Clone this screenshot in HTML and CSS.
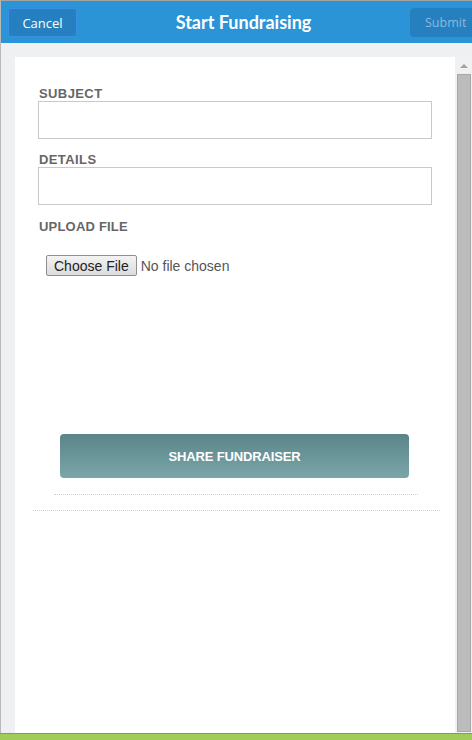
FILE: index.html
```html
<!DOCTYPE html>
<html>
<head>
<meta charset="utf-8">
<link rel="stylesheet" href="styles.css">
</head>
<body>
<div class="app">
  <header class="topbar">
    <button class="hbtn cancel">Cancel</button>
    <h1 class="title">Start Fundraising</h1>
    <button class="hbtn submit">Submit</button>
  </header>
  <main class="stage">
    <div class="panel">
      <div class="content">
        <form class="form">
          <label class="lbl">SUBJECT</label>
          <input class="field" type="text">
          <label class="lbl">DETAILS</label>
          <input class="field" type="text">
          <label class="lbl upl">UPLOAD FILE</label>
          <div class="filewrap"><input class="file" type="file"></div>
        </form>
        <div class="actions">
          <button class="share">SHARE FUNDRAISER</button>
        </div>
        <div class="rule rule1"></div>
        <div class="rule rule2"></div>
      </div>
      <div class="scrollbar">
        <div class="arrow"></div>
        <div class="thumb"></div>
      </div>
    </div>
  </main>
  <footer class="greenbar"></footer>
</div>
</body>
</html>
```
FILE: styles.css
```css
* { box-sizing: border-box; }
html, body { margin: 0; padding: 0; }
body { width: 472px; height: 740px; overflow: hidden; font-family: "Liberation Sans", Arial, sans-serif; background: #eff0f2; }
.app { height: 740px; display: flex; flex-direction: column; border-top: 1px solid #a3a3a3; border-left: 1px solid #b9b9b9; }
.topbar { height: 42px; flex: none; background: #2b94d7; display: flex; align-items: center; justify-content: space-between; padding: 0 0 0 7px; position: relative; }
.hbtn { height: 29px; border-radius: 3px; font-family: "Open Sans", "Liberation Sans", sans-serif; font-size: 13px; background: #2680c0; border: 1px solid #2680c0; padding: 0; margin-top: 1px; }
.cancel { width: 69px; color: #fff; border-color: #3c8fe2; }
.submit { width: 62px; color: #8ab9dd; text-align: left; padding-left: 14px; border-radius: 4px 0 0 4px; font-size: 12.5px; }
.title { margin: 0; font-family: Lato, "Liberation Sans", sans-serif; font-weight: 700; font-size: 18px; color: #fff; position: absolute; left: 0; right: 0; text-align: center; pointer-events: none; padding-left: 14px; }
.stage { flex: 1; display: flex; padding: 14px 0 0 14px; min-height: 0; }
.panel { flex: 1; display: flex; background: #fff; }
.content { width: 440px; display: flex; flex-direction: column; }
.form { display: flex; flex-direction: column; padding: 30px 22px 0 23px; }
.lbl { font-size: 13px; font-weight: 700; color: #666; line-height: 14px; padding-left: 1px; letter-spacing: 0.4px; }
.field { height: 38px; width: 394px; border: 1px solid #c9c9c9; margin: 0 0 14px; font-size: 14px; }
.upl { letter-spacing: 0.2px; margin-top: 1px; }
.filewrap { padding: 21px 0 0 8px; }
.file { font-family: "Liberation Sans", Arial, sans-serif; font-size: 14px; color: #555; }
.file::file-selector-button { font-family: "Liberation Sans", Arial, sans-serif; font-size: 14px; color: #222; height: 21px; padding: 0 7px; margin-right: 4px; border: 1px solid #8f8f8f; border-radius: 2px; background: linear-gradient(#f3f3f3, #dcdcdc); }
.actions { display: flex; justify-content: center; margin-top: 158px; padding-right: 1px; }
.share { width: 349px; height: 44px; border: none; border-radius: 4px; background: linear-gradient(#5a8488, #7aa6aa); color: #fff; font-family: "Liberation Sans", Arial, sans-serif; font-weight: 700; font-size: 13px; letter-spacing: -0.15px; padding: 0; }
.rule { border-top: 1px dotted #d2d2d2; align-self: center; }
.rule1 { width: 364px; margin-top: 16px; margin-left: 2px; }
.rule2 { width: 407px; margin-top: 15px; margin-left: 2px; }
.scrollbar { width: 17px; background: #f1f1f1; display: flex; flex-direction: column; align-items: center; padding-bottom: 1px; }
.arrow { margin-top: 7px; width: 0; height: 0; border-left: 4px solid transparent; border-right: 4px solid transparent; border-bottom: 4px solid #a3a3a3; }
.thumb { margin-top: 6px; width: 14px; flex: 1; background: #bcbcbc; border: 1px solid #a8a8a8; }
.greenbar { height: 7px; flex: none; background: #a0cc5a; border-top: 1px solid #7f9f55; margin-left: -1px; }
```
